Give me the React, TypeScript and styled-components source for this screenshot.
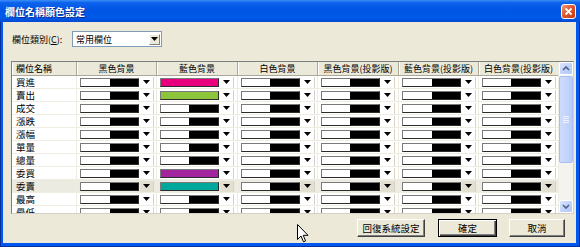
import React from "react";
import styled, { createGlobalStyle } from "styled-components";

const GlobalStyle = createGlobalStyle`
  html, body {
    margin: 0;
    padding: 0;
    background: #ffffff;
  }
  body {
    width: 580px;
    height: 247px;
    overflow: hidden;
    font-family: "Noto Sans CJK TC", "Liberation Sans", sans-serif;
  }
`;

const Window = styled.div`
  position: relative;
  width: 580px;
  height: 247px;
  display: flex;
  flex-direction: column;
  background: #0058ee;
  box-sizing: border-box;
  border: 1px solid #0831a0;
  border-top: none;
`;

const TitleBar = styled.div`
  height: 22px;
  flex: none;
  display: flex;
  align-items: center;
  justify-content: space-between;
  padding: 0 4px 0 5px;
  margin: 0 -1px;
  background: linear-gradient(
    to bottom,
    #3c8ef7 0%,
    #0d63ec 12%,
    #0055e5 45%,
    #005ae9 80%,
    #0049d2 100%
  );
  color: #ffffff;
  font-size: 10px;
  font-weight: bold;
  text-shadow: 1px 1px 0 #0b2a8c;
`;

const CloseButton = styled.div`
  width: 15px;
  height: 15px;
  box-sizing: border-box;
  border: 1px solid #ffffff;
  border-radius: 3px;
  background: linear-gradient(135deg, #f09a7c 0%, #e0572f 45%, #c4380e 100%);
  display: flex;
  align-items: center;
  justify-content: center;
`;

const Body = styled.div`
  flex: 1;
  margin: 0 3px 3px 2px;
  background: #ece9d8;
  padding: 9px 0 0 8px;
  display: flex;
  flex-direction: column;
  font-size: 9px;
  color: #000000;
`;

const CategoryRow = styled.div`
  display: flex;
  align-items: center;
  height: 16px;
`;

const Label = styled.span`
  width: 60px;
  padding-left: 1px;
  white-space: nowrap;
  font-size: 9px;

  u {
    text-decoration: underline;
  }
`;

const ComboBox = styled.div`
  width: 90px;
  height: 16px;
  box-sizing: border-box;
  border: 1px solid #7f9db9;
  background: #ffffff;
  display: flex;
  align-items: center;
  justify-content: space-between;
  padding: 0 1px 0 3px;
  font-size: 9px;
`;

const ComboButton = styled.div`
  width: 11px;
  height: 11px;
  box-sizing: border-box;
  border: 1px solid;
  border-color: #ffffff #808080 #808080 #ffffff;
  background: #ece9d8;
  display: flex;
  align-items: center;
  justify-content: center;
`;

const Grid = styled.div`
  margin-top: 14px;
  width: 563px;
  height: 153px;
  box-sizing: border-box;
  border: 1px solid #7f7f7f;
  border-right-color: #d4d0c8;
  border-bottom-color: #d4d0c8;
  display: flex;
  background: #ffffff;
`;

const TableArea = styled.div`
  flex: 1;
  overflow: hidden;
`;

const columns = "65px 80px 81px 80px 81px 80px 80px";

const HeaderRow = styled.div`
  display: grid;
  grid-template-columns: ${columns};
  height: 13px;
  background: #ebe9d9;
  border-bottom: 1px solid #aca899;
`;

const HeaderCell = styled.div<{ $left?: boolean }>`
  box-sizing: border-box;
  border-right: 1px solid #aca899;
  box-shadow: inset 1px 0 0 #ffffff;
  font-size: 9px;
  line-height: 13px;
  white-space: nowrap;
  overflow: hidden;
  text-align: ${(p) => (p.$left ? "left" : "center")};
  padding-left: ${(p) => (p.$left ? "4px" : "0")};
`;

const Row = styled.div<{ $selected?: boolean }>`
  display: grid;
  grid-template-columns: ${columns};
  height: 13px;
  background: ${(p) => (p.$selected ? "#ecebe2" : "#ffffff")};
`;

const NameCell = styled.div`
  box-sizing: border-box;
  border-right: 1px solid #efede2;
  border-bottom: 1px solid #efede2;
  padding-left: 4px;
  font-size: 9.5px;
  line-height: 12px;
  white-space: nowrap;
`;

const ColorCell = styled.div`
  box-sizing: border-box;
  border-right: 1px solid #efede2;
  border-bottom: 1px solid #efede2;
  display: flex;
  align-items: center;
  padding-left: 3px;
`;

const Swatch = styled.div<{ $color?: string }>`
  width: 59px;
  height: 9px;
  box-sizing: border-box;
  border: 1px solid #2b2b2b;
  border-top-color: #7a7a7a;
  border-left-color: #7a7a7a;
  background: ${(p) =>
    p.$color
      ? p.$color
      : "linear-gradient(to right, #ffffff 0, #ffffff 50%, #000000 50%, #000000 100%)"};
`;

const ArrowBox = styled.div<{ $selected?: boolean }>`
  width: 14px;
  height: 11px;
  margin-left: 1px;
  box-sizing: border-box;
  display: flex;
  align-items: center;
  justify-content: center;
  border-right: 1px solid #d6d3c6;
  background: ${(p) => (p.$selected ? "#e3e0d1" : "transparent")};
`;

const ScrollBar = styled.div`
  width: 14px;
  flex: none;
  display: flex;
  flex-direction: column;
  background: #f4f3ee;
  border-left: 1px solid #eeede5;
`;

const ScrollButton = styled.div`
  height: 13px;
  flex: none;
  box-sizing: border-box;
  border: 1px solid #ffffff;
  border-radius: 2px;
  background: linear-gradient(135deg, #dbe6fe 0%, #c1d3fb 50%, #b0c7f7 100%);
  display: flex;
  align-items: center;
  justify-content: center;
`;

const Thumb = styled.div`
  height: 87px;
  margin-top: 1px;
  flex: none;
  box-sizing: border-box;
  border: 1px solid #a8c0f4;
  border-radius: 2px;
  background: linear-gradient(to right, #cddbfc 0%, #c5d5fb 50%, #b8cbf8 100%);
  display: flex;
  align-items: center;
  justify-content: center;
`;

const Track = styled.div`
  flex: 1;
`;

const ButtonRow = styled.div`
  display: flex;
  justify-content: flex-end;
  gap: 0;
  margin-top: 5px;
  padding-right: 11px;
`;

const Button = styled.div<{ $width: number; $default?: boolean; $gap?: number }>`
  width: ${(p) => p.$width}px;
  height: 18px;
  margin-right: ${(p) => p.$gap ?? 0}px;
  box-sizing: border-box;
  border: 1px solid;
  border-color: ${(p) =>
    p.$default ? "#000000" : "#ffffff #404040 #404040 #ffffff"};
  box-shadow: ${(p) =>
    p.$default
      ? "inset 1px 1px 0 #ffffff, inset -1px -1px 0 #404040, inset -2px -2px 0 #808080"
      : "inset -1px -1px 0 #808080"};
  background: #ece9d8;
  font-size: 9.5px;
  line-height: 16px;
  text-align: center;
  white-space: nowrap;
`;

const Cursor = styled.svg`
  position: absolute;
  left: 296px;
  top: 224px;
`;

const DownTriangle = () => (
  <svg width="7" height="4" viewBox="0 0 7 4">
    <path d="M0 0 H7 L3.5 4 Z" fill="#000" />
  </svg>
);

const rowNames = ["買進", "賣出", "成交", "漲跌", "漲幅", "單量", "總量", "委買", "委賣", "最高", "最低"];
const columnNames = [
  "黑色背景",
  "藍色背景",
  "白色背景",
  "黑色背景(投影版)",
  "藍色背景(投影版)",
  "白色背景(投影版)",
];

// special swatches in the blue background column
const swatchColors: Record<string, string> = {
  "0-1": "#e8007f",
  "1-1": "#8cc43c",
  "7-1": "#a2259f",
  "8-1": "#00a89b",
};

const SELECTED = 8;

const App: React.FC = () => {
  return (
    <>
      <GlobalStyle />
      <Window>
        <TitleBar>
          <span>欄位名稱顏色設定</span>
          <CloseButton>
            <svg width="9" height="9" viewBox="0 0 9 9">
              <path d="M1.5 1.5 L7.5 7.5 M7.5 1.5 L1.5 7.5" stroke="#fff" strokeWidth="1.8" />
            </svg>
          </CloseButton>
        </TitleBar>

        <Body>
          {/* Category selector */}
          <CategoryRow>
            <Label>
              欄位類別(<u>C</u>):
            </Label>
            <ComboBox>
              <span>常用欄位</span>
              <ComboButton>
                <DownTriangle />
              </ComboButton>
            </ComboBox>
          </CategoryRow>

          {/* Color grid */}
          <Grid>
            <TableArea>
              <HeaderRow>
                <HeaderCell $left>欄位名稱</HeaderCell>
                {columnNames.map((c) => (
                  <HeaderCell key={c}>{c}</HeaderCell>
                ))}
              </HeaderRow>
              {rowNames.map((name, r) => (
                <Row key={name} $selected={r === SELECTED}>
                  <NameCell>{name}</NameCell>
                  {columnNames.map((c, ci) => (
                    <ColorCell key={c}>
                      <Swatch $color={swatchColors[`${r}-${ci}`]} />
                      <ArrowBox $selected={r === SELECTED}>
                        <DownTriangle />
                      </ArrowBox>
                    </ColorCell>
                  ))}
                </Row>
              ))}
            </TableArea>
            <ScrollBar>
              <ScrollButton>
                <svg width="8" height="5" viewBox="0 0 8 5">
                  <path d="M1 4 L4 1 L7 4" stroke="#4d6185" strokeWidth="1.6" fill="none" />
                </svg>
              </ScrollButton>
              <Thumb>
                <svg width="6" height="7" viewBox="0 0 6 7">
                  <path d="M0 0.5 H6 M0 2.5 H6 M0 4.5 H6 M0 6.5 H6" stroke="#eef3fe" strokeWidth="1" />
                </svg>
              </Thumb>
              <Track />
              <ScrollButton>
                <svg width="8" height="5" viewBox="0 0 8 5">
                  <path d="M1 1 L4 4 L7 1" stroke="#4d6185" strokeWidth="1.6" fill="none" />
                </svg>
              </ScrollButton>
            </ScrollBar>
          </Grid>

          {/* Dialog buttons */}
          <ButtonRow>
            <Button $width={68} $gap={13}>回復系統設定</Button>
            <Button $width={59} $gap={12} $default>確定</Button>
            <Button $width={56}>取消</Button>
          </ButtonRow>
        </Body>

        <Cursor width="12" height="19" viewBox="0 0 12 19">
          <path
            d="M0.5 0.5 L0.5 15.5 L4 12 L6.5 17.8 L8.6 16.9 L6.2 11.3 L11 11.3 Z"
            fill="#fff"
            stroke="#000"
            strokeWidth="1"
          />
        </Cursor>
      </Window>
    </>
  );
};

export default App;
